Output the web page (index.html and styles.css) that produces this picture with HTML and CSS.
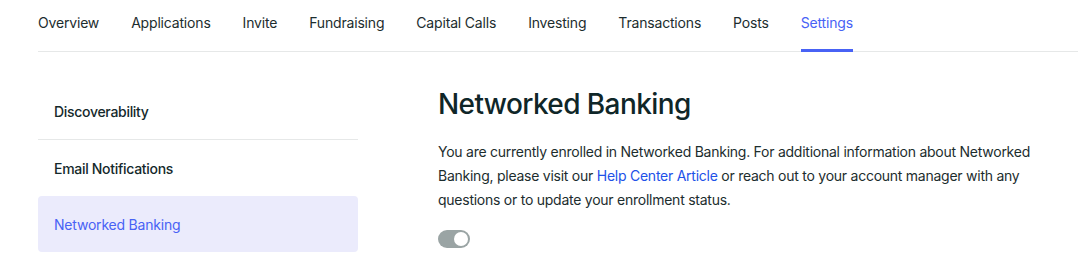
FILE: index.html
```html
<!DOCTYPE html>
<html lang="en">
<head>
  <meta charset="UTF-8" />
  <title>Settings - Networked Banking</title>
  <link rel="stylesheet" href="styles.css">
</head>
<body>
  <div class="page">
    <nav class="tabs">
      <a class="tab" href="#">Overview</a>
      <a class="tab" href="#">Applications</a>
      <a class="tab" href="#">Invite</a>
      <a class="tab" href="#">Fundraising</a>
      <a class="tab" href="#">Capital Calls</a>
      <a class="tab" href="#">Investing</a>
      <a class="tab" href="#">Transactions</a>
      <a class="tab" href="#">Posts</a>
      <a class="tab active" href="#">Settings</a>
    </nav>

    <div class="settings">
      <!-- Left side menu -->
      <ul class="side-menu">
        <li class="side-item">Discoverability</li>
        <li class="side-item">Email Notifications</li>
        <li class="side-item active">Networked Banking</li>
      </ul>

      <div class="panel">
        <h1>Networked Banking</h1>
        <p>
          You are currently enrolled in Networked Banking. For additional information about Networked
          Banking, please visit our <a href="#">Help Center Article</a> or reach out to your account manager with any
          questions or to update your enrollment status.
        </p>
        <div class="toggle"><span class="knob"></span></div>
      </div>
    </div>
  </div>
</body>
</html>
```

FILE: styles.css
```css
* {
  box-sizing: border-box;
}
body {
  margin: 0;
  font-family: Inter, 'Noto Sans', sans-serif;
  color: #1c2d2e;
  background: #fff;
}
.page {
  padding: 0 9px 0 38px;
}
.tabs {
  display: flex;
  gap: 32px;
  border-bottom: 1px solid #e6e8e8;
}
.tab {
  display: block;
  padding: 13px 0 16px;
  margin-bottom: -1px;
  border-bottom: 3px solid transparent;
  font-size: 14px;
  line-height: 20px;
  letter-spacing: -0.18px;
  color: #1c2d2e;
  text-decoration: none;
}
.tab.active {
  color: #4862f5;
  border-bottom-color: #4862f5;
}
.settings {
  display: flex;
  gap: 80px;
  padding-top: 31px;
}
.side-menu {
  list-style: none;
  margin: 0;
  padding: 0;
  width: 320px;
  flex-shrink: 0;
}
.side-item {
  height: 56px;
  display: flex;
  align-items: center;
  padding-left: 16px;
  font-size: 14px;
  font-weight: 500;
  letter-spacing: -0.3px;
  color: #14292b;
}
.side-item:first-child {
  height: 57px;
  border-bottom: 1px solid #e6e8e8;
}
.side-item.active {
  background: #ebebfc;
  border-radius: 4px;
  color: #4862f5;
  font-weight: 400;
  letter-spacing: -0.2px;
}
.panel {
  max-width: 600px;
  padding-top: 4px;
}
.panel h1 {
  margin: 0 0 19px;
  font-size: 28px;
  line-height: 34px;
  font-weight: 500;
  letter-spacing: -0.6px;
  color: #0f2628;
}
.panel p {
  margin: 0 0 18px;
  font-size: 14px;
  line-height: 24px;
  letter-spacing: -0.25px;
  color: #1c2d2e;
}
.panel p a {
  color: #2151e8;
  text-decoration: none;
}
.toggle {
  width: 32px;
  height: 18px;
  border-radius: 9px;
  background: #9aa4a4;
  display: flex;
  justify-content: flex-end;
  align-items: center;
  padding: 2px;
}
.knob {
  width: 14px;
  height: 14px;
  border-radius: 50%;
  background: #fff;
}
```
